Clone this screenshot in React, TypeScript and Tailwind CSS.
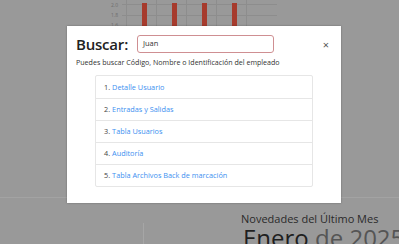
import React from "react";

const items = [
  "Detalle Usuario",
  "Entradas y Salidas",
  "Tabla Usuarios",
  "Auditoría",
  "Tabla Archivos Back de marcación",
];

function Chart() {
  const bars = [142, 172, 202, 232];
  const vlines = [126, 156, 186, 216, 246];
  return (
    <svg width="399" height="30" className="block">
      <text x="111" y="7" fontSize="5" fill="#6e6e6e" fontFamily="Open Sans, sans-serif">2.0</text>
      <text x="111" y="17" fontSize="5" fill="#6e6e6e" fontFamily="Open Sans, sans-serif">1.8</text>
      <text x="111" y="27" fontSize="5" fill="#6e6e6e" fontFamily="Open Sans, sans-serif">1.6</text>
      <line x1="122" y1="4.5" x2="277" y2="4.5" stroke="#8d8d8d" strokeWidth="1" />
      <line x1="122" y1="15.5" x2="277" y2="15.5" stroke="#8d8d8d" strokeWidth="1" />
      {vlines.map((x) => (
        <line key={x} x1={x + 0.5} y1="0" x2={x + 0.5} y2="30" stroke="#8d8d8d" strokeWidth="1" />
      ))}
      {bars.map((x) => (
        <rect key={x} x={x} y="3" width="5" height="27" fill="#a63b2d" />
      ))}
    </svg>
  );
}

export default function App() {
  return (
    <div
      className="relative w-[399px] h-[244px] overflow-hidden bg-[#999999]"
      style={{ fontFamily: "'Open Sans', 'Noto Sans', sans-serif" }}
    >
      <Chart />
      <div className="mt-[167px] border-t border-[#a3a3a3] flex">
        <div className="w-[144px] shrink-0 border-r border-[#a6a6a6] mt-[25px] h-[30px]" />
        <div className="flex flex-col items-start ml-[97px] mt-[14px]">
          <div className="text-[11px] leading-[13px] text-[#2a2a2a] whitespace-nowrap">Novedades del Último Mes</div>
          <div className="ml-[2px] text-[24px] leading-[26px] whitespace-nowrap">
            <span className="text-[#1f1f1f]">Enero</span> <span className="text-[#555555]">de 2025</span>
          </div>
        </div>
      </div>

      <div className="absolute left-[67px] top-[26px] w-[274px] h-[177px] bg-white shadow-[0_0_2px_rgba(0,0,0,0.3)] px-[9px] pt-[9px]">
        <div className="flex items-center h-[18px]">
          <div className="text-[15px] leading-[18px] font-semibold tracking-[-0.2px] text-[#222] w-[61px] whitespace-nowrap">Buscar:</div>
          <div className="w-[137px] h-[18px] border border-[#cf8f92] rounded-[3px] flex items-center px-[5px] text-[7.5px] text-[#333]">
            Juan
          </div>
          <div className="ml-auto mr-[3px] text-[11px] leading-none text-[#555]">×</div>
        </div>
        <div className="mt-[4px] text-[7.1px] leading-[10px] text-[#333] whitespace-nowrap">
          Puedes buscar Código, Nombre o Identificación del empleado
        </div>
        <div className="mt-[8px] ml-[19px] w-[218px] border border-[#e6e6e6] rounded-[2px]">
          {items.map((t, i) => (
            <div
              key={t}
              className={`h-[22px] flex items-center px-[8px] text-[7.3px] ${i > 0 ? "border-t border-[#e6e6e6]" : ""}`}
            >
              <span className="text-[#444]">{i + 1}.</span>
              <span className="ml-[2px] text-[#3d8ff0]">{t}</span>
            </div>
          ))}
        </div>
      </div>
    </div>
  );
}
